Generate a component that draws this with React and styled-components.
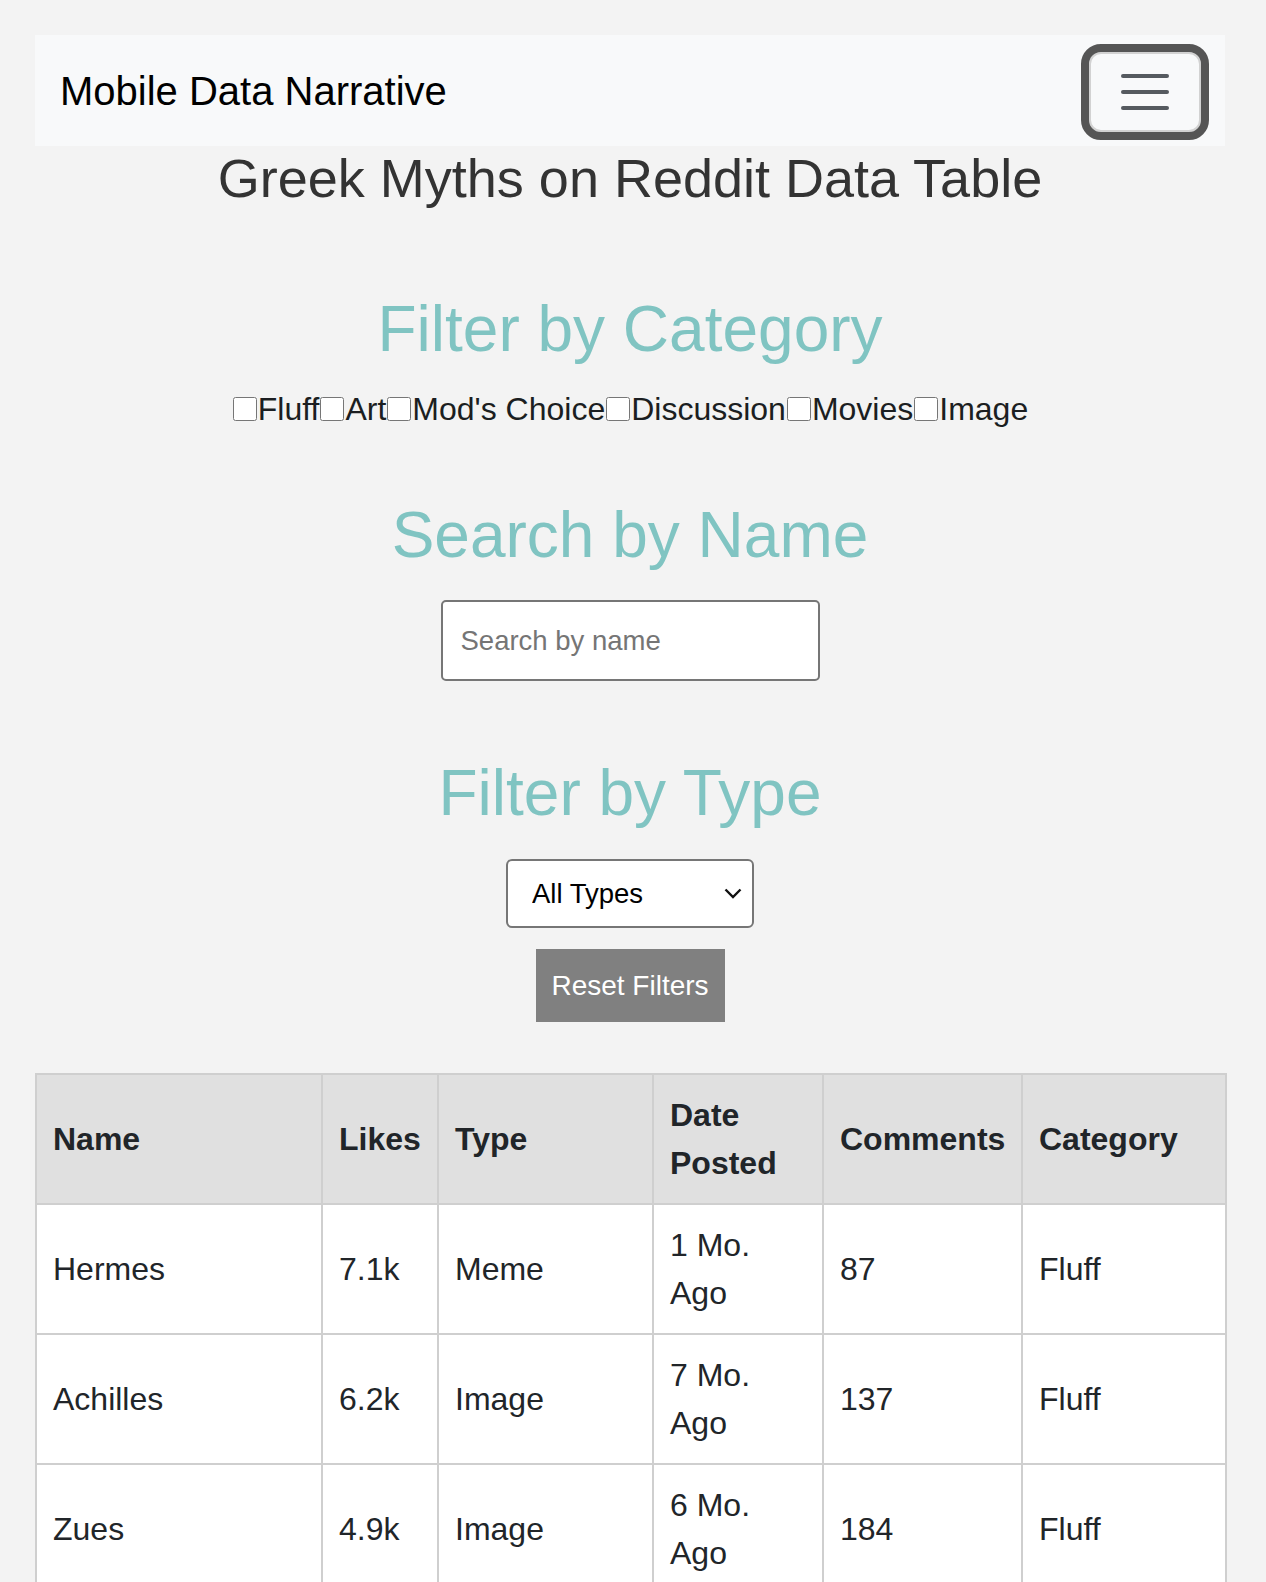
import React from "react";
import styled, { createGlobalStyle } from "styled-components";

const GlobalStyle = createGlobalStyle`
  html, body {
    margin: 0;
    padding: 0;
    background: #f3f3f3;
  }
  body {
    font-family: "Liberation Sans", Arial, sans-serif;
    color: #212529;
  }
`;

const categories = ["Fluff", "Art", "Mod's Choice", "Discussion", "Movies", "Image"];

const posts = [
  { name: "Hermes", likes: "7.1k", type: "Meme", date: "1 Mo. Ago", comments: 87, category: "Fluff" },
  { name: "Achilles", likes: "6.2k", type: "Image", date: "7 Mo. Ago", comments: 137, category: "Fluff" },
  { name: "Zues", likes: "4.9k", type: "Image", date: "6 Mo. Ago", comments: 184, category: "Fluff" },
];

export default function App() {
  return (
    <>
      <GlobalStyle />
      <Page>
        <NavBar>
          <Brand>Mobile Data Narrative</Brand>
          <Toggler aria-label="menu">
            <svg width="48" height="36" viewBox="0 0 48 36">
              <g stroke="#555a5f" strokeWidth="4" strokeLinecap="round">
                <line x1="2" y1="2" x2="46" y2="2" />
                <line x1="2" y1="18" x2="46" y2="18" />
                <line x1="2" y1="34" x2="46" y2="34" />
              </g>
            </svg>
          </Toggler>
        </NavBar>

        <Content>
          <PageTitle>Greek Myths on Reddit Data Table</PageTitle>

          <SectionTitle $top={83}>Filter by Category</SectionTitle>
          <CheckRow>
            {categories.map((c) => (
              <CheckLabel key={c}>
                <Check type="checkbox" />
                {c}
              </CheckLabel>
            ))}
          </CheckRow>

          <SectionTitle $top={65}>Search by Name</SectionTitle>
          <SearchInput placeholder="Search by name" />

          <SectionTitle $top={75}>Filter by Type</SectionTitle>
          <SelectWrap>
            <TypeSelect defaultValue="all">
              <option value="all">All Types</option>
              <option value="meme">Meme</option>
              <option value="image">Image</option>
            </TypeSelect>
            <Chevron width="18" height="11" viewBox="0 0 18 11">
              <path d="M1.5 1.5 L9 9 L16.5 1.5" fill="none" stroke="#111" strokeWidth="2.4" />
            </Chevron>
          </SelectWrap>
          <ResetButton>Reset Filters</ResetButton>
        </Content>

        <DataTable>
          <colgroup>
            <col style={{ width: 286 }} />
            <col style={{ width: 116 }} />
            <col style={{ width: 215 }} />
            <col style={{ width: 170 }} />
            <col style={{ width: 199 }} />
            <col style={{ width: 204 }} />
          </colgroup>
          <thead>
            <tr>
              <Th>Name</Th>
              <Th>Likes</Th>
              <Th>Type</Th>
              <Th>Date Posted</Th>
              <Th>Comments</Th>
              <Th>Category</Th>
            </tr>
          </thead>
          <tbody>
            {posts.map((p) => (
              <tr key={p.name}>
                <Td>{p.name}</Td>
                <Td>{p.likes}</Td>
                <Td>{p.type}</Td>
                <Td>{p.date}</Td>
                <Td>{p.comments}</Td>
                <Td>{p.category}</Td>
              </tr>
            ))}
          </tbody>
        </DataTable>
      </Page>
    </>
  );
}

const Page = styled.div`
  width: 1190px;
  padding: 35px 41px 0 35px;
`;

const NavBar = styled.nav`
  height: 111px;
  background: #f8f9fa;
  display: flex;
  align-items: center;
  justify-content: space-between;
  padding: 0 16px 0 25px;
  box-sizing: border-box;
`;

const Brand = styled.div`
  font-size: 40px;
  color: #000;
  margin-top: 1px;
`;

const Toggler = styled.button`
  width: 128px;
  height: 96px;
  box-sizing: border-box;
  border: 8px solid #555;
  border-radius: 20px;
  background: #f8f9fa;
  box-shadow: inset 0 0 0 2px #d2d2d2;
  display: flex;
  align-items: center;
  justify-content: center;
  padding: 0;
  margin-top: 2px;
`;

const Content = styled.div`
  display: flex;
  flex-direction: column;
  align-items: center;
`;

const PageTitle = styled.h1`
  margin: 2px 0 0;
  font-size: 54px;
  font-weight: 400;
  line-height: 61px;
  color: #333;
`;

const SectionTitle = styled.h2`
  margin: ${(p) => p.$top}px 0 0;
  font-size: 64px;
  font-weight: 400;
  line-height: 74px;
  color: #80c4c2;
`;

const CheckRow = styled.div`
  margin-top: 19px;
  display: flex;
  align-items: center;
  font-size: 32px;
  line-height: 48px;
  color: #1b1e21;
`;

const CheckLabel = styled.label`
  display: flex;
  align-items: center;
`;

const Check = styled.input`
  width: 24px;
  height: 24px;
  margin: 0 1px 0 1px;
`;

const SearchInput = styled.input`
  margin-top: 28px;
  width: 379px;
  height: 81px;
  box-sizing: border-box;
  border: 2px solid #767676;
  border-radius: 5px;
  background: #fff;
  padding: 0 18px;
  font-family: "Liberation Sans", Arial, sans-serif;
  font-size: 27.5px;
  color: #212529;
  &::placeholder {
    color: #757575;
  }
`;

const SelectWrap = styled.div`
  position: relative;
  margin-top: 29px;
  width: 248px;
  height: 69px;
`;

const TypeSelect = styled.select`
  appearance: none;
  width: 100%;
  height: 100%;
  box-sizing: border-box;
  border: 2px solid #767676;
  border-radius: 6px;
  background: #fff;
  padding: 0 0 0 24px;
  font-family: "Liberation Sans", Arial, sans-serif;
  font-size: 27.5px;
  color: #000;
`;

const Chevron = styled.svg`
  position: absolute;
  right: 12px;
  top: 29px;
  pointer-events: none;
`;

const ResetButton = styled.button`
  margin-top: 21px;
  width: 189px;
  height: 73px;
  border: none;
  background: #808080;
  color: #fff;
  font-family: "Liberation Sans", Arial, sans-serif;
  font-size: 28px;
  padding: 0;
`;

const DataTable = styled.table`
  margin-top: 51px;
  width: 1190px;
  table-layout: fixed;
  border-collapse: collapse;
  border: 2px solid #cfcfcf;
  font-size: 32px;
  line-height: 48px;
`;

const Th = styled.th`
  background: #e0e0e0;
  border: 2px solid #cfcfcf;
  padding: 16px;
  text-align: left;
  vertical-align: middle;
  font-weight: 700;
  color: #212529;
`;

const Td = styled.td`
  background: #fff;
  border: 2px solid #cfcfcf;
  padding: 16px;
  height: 96px;
  vertical-align: middle;
  color: #212529;
`;
